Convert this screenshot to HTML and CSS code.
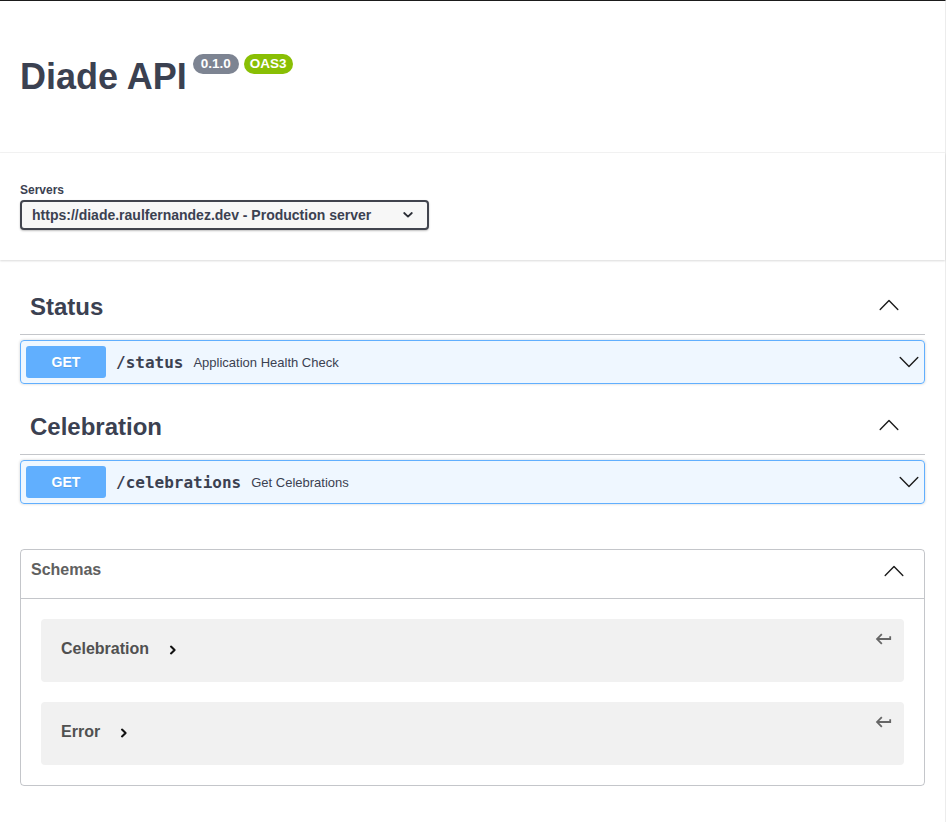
FILE: index.html
```html
<!DOCTYPE html>
<html lang="en">
<head>
<meta charset="utf-8">
<title>Diade API</title>
<link rel="stylesheet" href="styles.css">
</head>
<body>
<div class="page">
  <div class="info-block">
    <div class="title-row">
      <h1 class="title">Diade API</h1>
      <span class="badge badge-gray">0.1.0</span>
      <span class="badge badge-green">OAS3</span>
    </div>
  </div>

  <div class="scheme-container">
    <div class="servers">
      <span class="servers-title">Servers</span>
      <div class="select">
        <span class="select-text">https://diade.raulfernandez.dev - Production server</span>
        <svg class="select-caret" width="10" height="6" viewBox="0 0 10 6"><polyline points="1.2,1 5,4.6 8.8,1" fill="none" stroke="#2b2e36" stroke-width="1.8" stroke-linecap="round" stroke-linejoin="round"/></svg>
      </div>
    </div>
  </div>

  <div class="ops">
    <section class="tag-section">
      <div class="tag-header">
        <h3 class="tag-title">Status</h3>
        <svg class="tag-arrow" width="20" height="20" viewBox="0 0 20 20"><polyline points="1.2,14.4 10,5.6 18.8,14.4" fill="none" stroke="#1b1b1b" stroke-width="1.4" stroke-linecap="round" stroke-linejoin="round"/></svg>
      </div>
      <div class="opblock">
        <span class="method">GET</span>
        <span class="path">/status</span>
        <span class="desc">Application Health Check</span>
        <svg class="op-arrow" width="20" height="20" viewBox="0 0 20 20"><polyline points="1.2,5.6 10,14.4 18.8,5.6" fill="none" stroke="#1b1b1b" stroke-width="1.4" stroke-linecap="round" stroke-linejoin="round"/></svg>
      </div>
    </section>

    <section class="tag-section">
      <div class="tag-header">
        <h3 class="tag-title">Celebration</h3>
        <svg class="tag-arrow" width="20" height="20" viewBox="0 0 20 20"><polyline points="1.2,14.4 10,5.6 18.8,14.4" fill="none" stroke="#1b1b1b" stroke-width="1.4" stroke-linecap="round" stroke-linejoin="round"/></svg>
      </div>
      <div class="opblock">
        <span class="method">GET</span>
        <span class="path">/celebrations</span>
        <span class="desc">Get Celebrations</span>
        <svg class="op-arrow" width="20" height="20" viewBox="0 0 20 20"><polyline points="1.2,5.6 10,14.4 18.8,5.6" fill="none" stroke="#1b1b1b" stroke-width="1.4" stroke-linecap="round" stroke-linejoin="round"/></svg>
      </div>
    </section>

    <section class="models">
      <div class="models-header">
        <h4 class="models-title">Schemas</h4>
        <svg class="models-arrow" width="20" height="20" viewBox="0 0 20 20"><polyline points="1.2,14.4 10,5.6 18.8,14.4" fill="none" stroke="#1b1b1b" stroke-width="1.4" stroke-linecap="round" stroke-linejoin="round"/></svg>
      </div>
      <div class="models-body">
        <div class="model-box">
          <span class="model-title">Celebration</span>
          <svg class="model-toggle" width="8" height="10" viewBox="0 0 8 10"><polyline points="2,1.6 5.6,5 2,8.4" fill="none" stroke="#111" stroke-width="2.1" stroke-linecap="round" stroke-linejoin="round"/></svg>
          <svg class="jump-to" width="18" height="18" viewBox="0 0 20 20"><path d="M19 7v4H5.83l3.58 3.59L8 16l-6-6 6-6 1.41 1.41L5.83 9H17V7z" fill="#666"/></svg>
        </div>
        <div class="model-box">
          <span class="model-title">Error</span>
          <svg class="model-toggle" width="8" height="10" viewBox="0 0 8 10"><polyline points="2,1.6 5.6,5 2,8.4" fill="none" stroke="#111" stroke-width="2.1" stroke-linecap="round" stroke-linejoin="round"/></svg>
          <svg class="jump-to" width="18" height="18" viewBox="0 0 20 20"><path d="M19 7v4H5.83l3.58 3.59L8 16l-6-6 6-6 1.41 1.41L5.83 9H17V7z" fill="#666"/></svg>
        </div>
      </div>
    </section>
  </div>
</div>
</body>
</html>
```

FILE: styles.css
```css
* { box-sizing: border-box; }

html, body {
  margin: 0;
  padding: 0;
  background: #fff;
}

body {
  font-family: "Liberation Sans", Arial, sans-serif;
  color: #3b4151;
}

.page {
  width: 946px;
  min-height: 822px;
  border-top: 1px solid #1b1b1b;
  border-right: 1px solid #ececec;
}

/* ---------- info ---------- */
.info-block {
  padding: 55px 20px 55px;
  border-bottom: 1px solid #f3f3f3;
}

.title-row {
  display: flex;
  align-items: flex-start;
}

.title {
  margin: 0;
  font-size: 36px;
  line-height: 41px;
  font-weight: 700;
  color: #3b4151;
}

.badge {
  margin-top: -2px;
  height: 20px;
  padding: 2px 7px;
  border-radius: 57px;
  color: #fff;
  font-size: 13.5px;
  line-height: 16px;
  font-weight: 700;
}

.badge-gray {
  margin-left: 6px;
  padding: 2px 8px;
  background: #7d8492;
}

.badge-green {
  margin-left: 5px;
  padding: 2px 6px;
  background: #89bf04;
}

/* ---------- servers ---------- */
.scheme-container {
  padding: 30px 20px;
  background: #fff;
  box-shadow: 0 1px 2px 0 rgba(0, 0, 0, 0.15);
}

.servers {
  display: flex;
  flex-direction: column;
  align-items: flex-start;
  gap: 3px;
}

.servers-title {
  font-size: 12px;
  line-height: 14px;
  font-weight: 700;
}

.select {
  display: flex;
  align-items: center;
  width: 409px;
  height: 30px;
  padding: 0 14px 0 10px;
  border: 2px solid #41444e;
  border-radius: 4px;
  background: #f7f7f7;
  box-shadow: 0 1px 2px 0 rgba(0, 0, 0, 0.25);
}

.select-text {
  flex: 1;
  font-size: 14px;
  line-height: 16px;
  font-weight: 700;
  color: #3b4151;
}

.select-caret { display: block; }

/* ---------- operations ---------- */
.ops {
  padding: 23px 20px 20px;
}

.tag-section {
  margin-bottom: 19px;
}

.tag-header {
  display: flex;
  align-items: flex-start;
  justify-content: space-between;
  padding: 10px 26px 13px 10px;
  border-bottom: 1px solid rgba(59, 65, 81, 0.3);
}

.tag-title {
  margin: 0;
  font-size: 24px;
  line-height: 28px;
  font-weight: 700;
  color: #3b4151;
}

.tag-arrow {
  display: block;
  margin-top: 2px;
}

.opblock {
  display: flex;
  align-items: center;
  margin-top: 5px;
  padding: 5px;
  border: 1px solid #61affe;
  border-radius: 4px;
  background: rgba(97, 175, 254, 0.1);
  box-shadow: 0 0 3px rgba(0, 0, 0, 0.19);
}

.method {
  width: 80px;
  height: 32px;
  display: flex;
  align-items: center;
  justify-content: center;
  border-radius: 3px;
  background: #61affe;
  color: #fff;
  font-size: 14px;
  font-weight: 700;
  text-shadow: 0 1px 0 rgba(0, 0, 0, 0.1);
}

.path {
  padding: 0 10px;
  font-family: "DejaVu Sans Mono", monospace;
  font-size: 16px;
  font-weight: 700;
  color: #3b4151;
}

.desc {
  flex: 1;
  font-size: 13px;
  color: #3b4151;
}

.op-arrow { display: block; }

/* ---------- models ---------- */
.models {
  margin-top: 45px;
  border: 1px solid rgba(59, 65, 81, 0.3);
  border-radius: 4px;
}

.models-header {
  display: flex;
  align-items: flex-start;
  justify-content: space-between;
  padding: 10px 20px 17px 10px;
  border-bottom: 1px solid rgba(59, 65, 81, 0.3);
}

.models-title {
  margin: 0;
  font-size: 16px;
  line-height: 20px;
  font-weight: 700;
  color: #606060;
}

.models-arrow {
  display: block;
  margin-top: 1px;
}

.models-body {
  display: flex;
  flex-direction: column;
  gap: 20px;
  padding: 20px;
}

.model-box {
  display: flex;
  align-items: center;
  height: 63px;
  padding: 0 12px 3px 20px;
  border-radius: 4px;
  background: #f1f1f1;
}

.model-title {
  font-size: 16px;
  line-height: 20px;
  font-weight: 700;
  color: #505050;
}

.model-toggle {
  display: block;
  margin-left: 20px;
  margin-top: 2px;
}

.jump-to {
  display: block;
  margin-left: auto;
  align-self: flex-start;
  margin-top: 11px;
}
```
